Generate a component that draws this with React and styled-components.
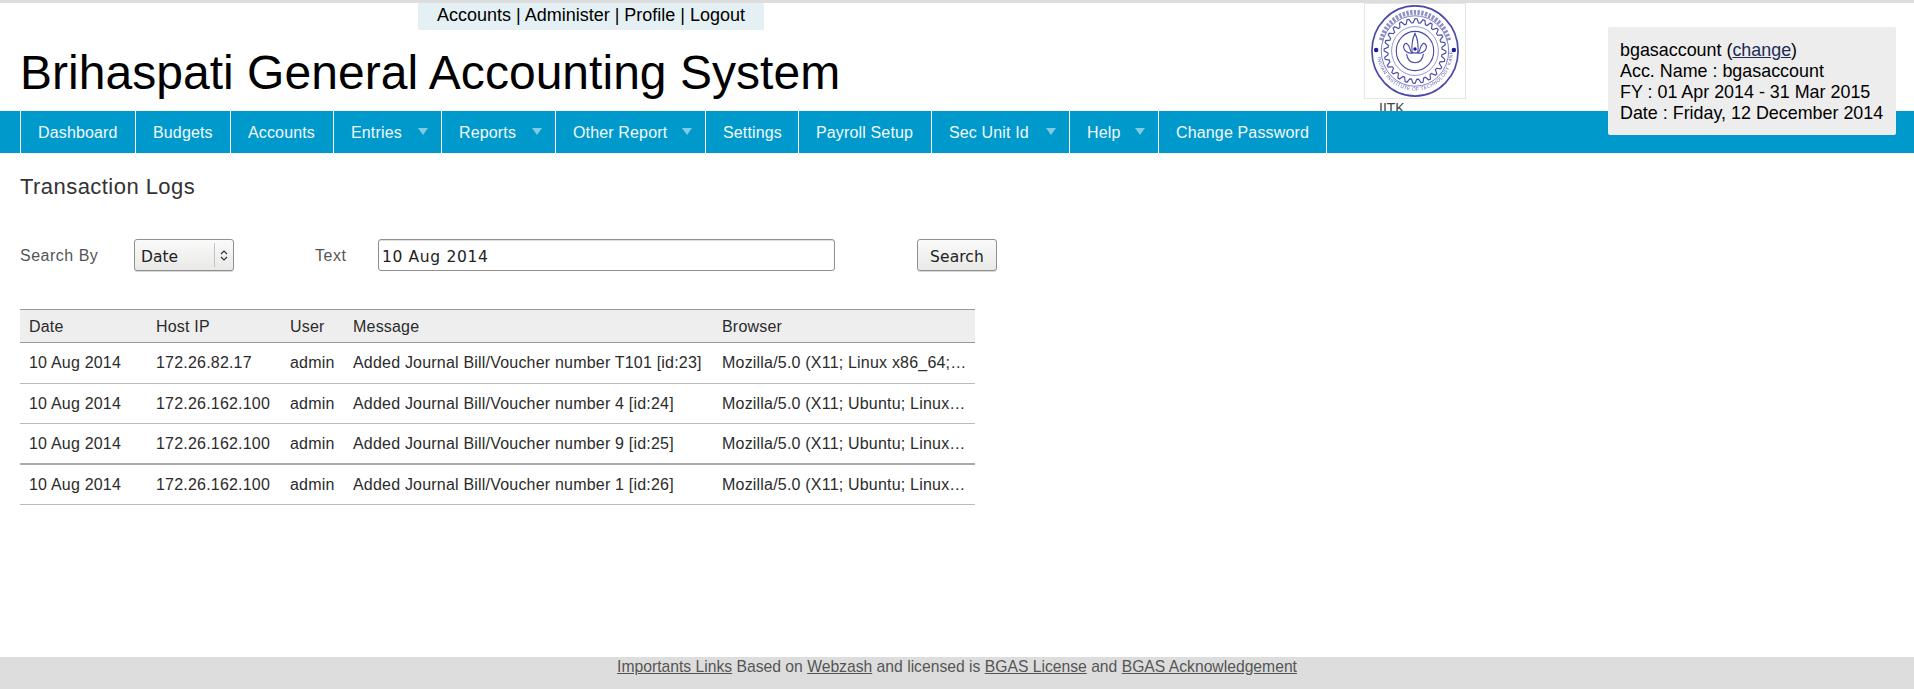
import React from "react";
import styled, { createGlobalStyle } from "styled-components";

const Global = createGlobalStyle`
  html, body { margin: 0; padding: 0; background: #fff; }
  body { font-family: "Liberation Sans", Arial, sans-serif; color: #222; }
  * { box-sizing: border-box; }
`;
const Page = styled.div`
  height: 689px; display: flex; flex-direction: column; overflow: hidden;
  border-top: 3px solid #ddd; position: relative;
`;
const Header = styled.header`
  height: 108px; display: flex; flex: none;
`;
const Brand = styled.div`
  width: 1364px; flex: none; padding-left: 20px;
`;
const TopLinks = styled.div`
  margin-left: 398px; width: 346px; height: 27px; background: #e5f0f4; color: #000;
  font-size: 18px; line-height: 24px; text-align: center;
`;
const Title = styled.h1`
  margin: 15px 0 0; font-weight: 400; font-size: 48px; line-height: 56px; color: #000; letter-spacing: .03px;
`;
const LogoBox = styled.figure`
  margin: 0; width: 102px;
`;
const LogoFrame = styled.div`
  width: 102px; height: 96px; border: 1px solid #e6e6e6; display: flex; align-items: center; justify-content: center;
`;
const LogoCaption = styled.figcaption`
  margin: 1px 0 0 15px; font-size: 14px; line-height: 16px; color: #444; height: 11px;
`;
const AccountBox = styled.div`
  position: absolute; left: 1608px; top: 24px; width: 288px; height: 108px; z-index: 2;
  background: #ededed; padding: 13px 0 0 12px; border-radius: 2px;
  color: #000; font-size: 17.9px; line-height: 21px; white-space: nowrap;
`;
const AccountLink = styled.a`
  color: #1f2a55; text-decoration: underline;
`;
const Nav = styled.nav`
  height: 42px; flex: none; background: #0099cc; display: flex; padding-left: 20px;
`;
const NavItem = styled.div`
  display: flex; align-items: center; height: 42px; color: #f2fafd; font-size: 16px; font-weight: 400; letter-spacing: .15px;
  width: ${p => p.$w}px; padding: 1px 0 0 17px; border-left: 1px solid #fff; position: relative;
  ${p => p.$last && "border-right: 1px solid #fff;"}
`;
const Caret = styled.span`
  position: absolute; right: 13px; top: 17px; width: 0; height: 0;
  border: 5.5px solid transparent; border-top: 7px solid #7fcbe6; border-bottom: 0;
`;
const Main = styled.main`
  flex: 1; padding: 21px 0 0 20px; color: #333;
`;
const Heading = styled.h2`
  margin: 0; font-weight: 400; font-size: 22px; line-height: 26px; color: #333; letter-spacing: .45px;
`;
const SearchForm = styled.form`
  display: flex; align-items: center; height: 32px; margin-top: 39px;
`;
const FieldLabel = styled.label`
  font-size: 16px; color: #555; width: ${p => p.$w}px; flex: none; letter-spacing: .5px; padding-top: 2px;
`;
const gtk = `
  font-family: "DejaVu Sans", sans-serif; font-size: 15.5px; color: #222;
  border: 1px solid #8f8f8f; border-radius: 3px;
  box-shadow: 0 1px 0 #d8d8d8;
`;
const SelectBox = styled.div`
  ${gtk}
  width: 100px; height: 32px; flex: none; display: flex; align-items: center; position: relative;
  padding: 3px 0 0 6px; margin-right: 81px;
  background: linear-gradient(#fafafa, #e9e9e7);
`;
const SelectSep = styled.span`
  position: absolute; right: 18px; top: 3px; bottom: 3px; width: 1px; background: #c4c4c4;
`;
const SelectArrows = styled.svg`
  position: absolute; right: 5px; top: 9px;
`;
const TextInput = styled.input`
  ${gtk}
  width: 457px; height: 32px; flex: none; padding: 3px 3px 0; margin-right: 82px; background: #fff; letter-spacing: .65px;
  box-shadow: inset 0 1px 1px #ddd;
`;
const SearchButton = styled.button`
  ${gtk}
  width: 80px; height: 32px; flex: none; padding: 3px 0 0;
  background: linear-gradient(#fafafa, #e9e9e7); letter-spacing: .1px;
`;
const Table = styled.table`
  margin-top: 38px; width: 955px; table-layout: fixed; border-collapse: collapse; font-size: 16px; color: #2b2b2b; letter-spacing: .2px;
`;
const Col = styled.col`
  width: ${p => p.$w}px;
`;
const Th = styled.th`
  background: #eee; font-weight: 400; text-align: left; height: 33px; padding: 1px 9px 0;
  border-top: 1px solid #999; border-bottom: 1px solid #999;
`;
const Td = styled.td`
  height: 40.5px; padding: 1px 7px 0 9px; white-space: nowrap; overflow: hidden; text-overflow: ellipsis;
  border-bottom: ${p => (p.$heavy ? "2px solid #aaa" : "1px solid #bbb")};
`;
const Footer = styled.footer`
  height: 32px; flex: none; background: #ddd; text-align: center; color: #555; font-size: 15.7px; line-height: 20px;
`;
const FootLink = styled.a`
  color: #555; text-decoration: underline;
`;

const gearPath = (() => {
  const n = 24;
  let d = "";
  for (let i = 0; i < n * 4; i++) {
    const a = (i / (n * 4)) * Math.PI * 2;
    const r = i % 4 < 2 ? 33 : 29;
    d += `${i ? "L" : "M"}${(47 + r * Math.cos(a)).toFixed(2)} ${(47 + r * Math.sin(a)).toFixed(2)}`;
  }
  return d + "z";
})();

function Logo() {
  return (
    <svg width="88" height="92" viewBox="0 0 94 94" preserveAspectRatio="none" fill="none" stroke="#4a4aa8" style={{ filter: "blur(.4px)" }}>
      <circle cx="47" cy="47" r="46" strokeWidth="1.800" />
      <circle cx="47" cy="47" r="36" strokeWidth="1" stroke="#7a7ac0" />
      <path id="lgBottom" d="M6.500 47a40.500 40.500 0 0 0 81 0" stroke="none" />
      <path d="M11 38a37 37 0 0 1 72 0" strokeWidth="5" strokeDasharray="2.500 1.500" stroke="#8f8fca" transform="translate(0 -2)" />
      <text fontSize="5" fontFamily="Liberation Sans" fill="#5a5aaa" stroke="none" letterSpacing=".5">
        <textPath href="#lgBottom" startOffset="5%">INDIAN INSTITUTE OF TECHNOLOGY KANPUR</textPath>
      </text>
      <circle cx="5.500" cy="46" r="2.400" fill="#1c1c9a" stroke="none" />
      <circle cx="88.500" cy="46" r="2.400" fill="#1c1c9a" stroke="none" />
      <path d={gearPath} strokeWidth="1.200" />
      <circle cx="47" cy="47" r="25" strokeWidth=".8" stroke="#7a7ac0" />
      <circle cx="47" cy="47" r="20" strokeWidth="1.200" />
      <path d="M47 29c-3 6-4 12-3 20h6c1-8 0-14-3-20z" strokeWidth="1.200" />
      <path d="M44 49c-3 1-8-1-9-5-1-3 2-6 4-4 3 2 2 7 5 9zM50 49c3 1 8-1 9-5 1-3-2-6-4-4-3 2-2 7-5 9z" strokeWidth="1.200" />
      <path d="M38 50c1 7 5 9 9 9s8-2 9-9" strokeWidth="1.200" />
      <circle cx="47" cy="45" r="1.800" fill="#1c1c9a" stroke="none" />
    </svg>
  );
}

const navItems = [
  ["Dashboard", 115], ["Budgets", 95], ["Accounts", 103], ["Entries", 108, 1], ["Reports", 114, 1],
  ["Other Report", 150, 1], ["Settings", 93], ["Payroll Setup", 133], ["Sec Unit Id", 138, 1],
  ["Help", 89, 1], ["Change Password", 169],
];
const rows = [
  ["172.26.82.17", "Added Journal Bill/Voucher number T101 [id:23]", "Mozilla/5.0 (X11; Linux x86_64; rv:31.0) Gecko/20100101"],
  ["172.26.162.100", "Added Journal Bill/Voucher number 4 [id:24]", "Mozilla/5.0 (X11; Ubuntu; Linux x86_64; rv:31.0)"],
  ["172.26.162.100", "Added Journal Bill/Voucher number 9 [id:25]", "Mozilla/5.0 (X11; Ubuntu; Linux x86_64; rv:31.0)"],
  ["172.26.162.100", "Added Journal Bill/Voucher number 1 [id:26]", "Mozilla/5.0 (X11; Ubuntu; Linux x86_64; rv:31.0)"],
];

export default function App() {
  return (
    <Page>
      <Global />
      <Header>
        <Brand>
          <TopLinks>Accounts | Administer | Profile | Logout</TopLinks>
          <Title>Brihaspati General Accounting System</Title>
        </Brand>
        <LogoBox>
          <LogoFrame><Logo /></LogoFrame>
          <LogoCaption>IITK</LogoCaption>
        </LogoBox>
      </Header>
      <AccountBox>
        bgasaccount (<AccountLink href="#">change</AccountLink>)<br />
        Acc. Name : bgasaccount<br />
        FY : 01 Apr 2014 - 31 Mar 2015<br />
        Date : Friday, 12 December 2014
      </AccountBox>
      <Nav>
        {navItems.map(([label, w, caret], i) => (
          <NavItem key={label} $w={w} $last={i === navItems.length - 1}>
            {label}
            {caret ? <Caret /> : null}
          </NavItem>
        ))}
      </Nav>
      <Main>
        <Heading>Transaction Logs</Heading>
        <SearchForm>
          <FieldLabel $w={114}>Search By</FieldLabel>
          <SelectBox>
            Date
            <SelectSep />
            <SelectArrows width="8" height="13" viewBox="0 0 8 13" fill="none" stroke="#333" strokeWidth="1.200">
              <path d="M1 5l3-3 3 3M1 8l3 3 3-3" />
            </SelectArrows>
          </SelectBox>
          <FieldLabel $w={63}>Text</FieldLabel>
          <TextInput defaultValue="10 Aug 2014" />
          <SearchButton type="button">Search</SearchButton>
        </SearchForm>
        <Table>
          <colgroup>
            <Col $w={127} /><Col $w={134} /><Col $w={63} /><Col $w={369} /><Col $w={262} />
          </colgroup>
          <thead>
            <tr><Th>Date</Th><Th>Host IP</Th><Th>User</Th><Th>Message</Th><Th>Browser</Th></tr>
          </thead>
          <tbody>
            {rows.map((r, i) => (
              <tr key={r[1]}>
                <Td $heavy={i === 2}>10 Aug 2014</Td>
                <Td $heavy={i === 2}>{r[0]}</Td>
                <Td $heavy={i === 2}>admin</Td>
                <Td $heavy={i === 2}>{r[1]}</Td>
                <Td $heavy={i === 2}>{r[2]}</Td>
              </tr>
            ))}
          </tbody>
        </Table>
      </Main>
      <Footer>
        <FootLink href="#">Importants Links</FootLink> Based on <FootLink href="#">Webzash</FootLink> and licensed is <FootLink href="#">BGAS License</FootLink> and <FootLink href="#">BGAS Acknowledgement</FootLink>
      </Footer>
    </Page>
  );
}
